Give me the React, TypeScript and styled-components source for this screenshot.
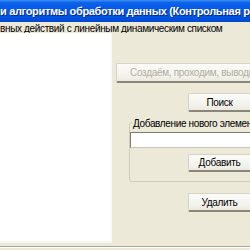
import React from "react";
import styled, { createGlobalStyle } from "styled-components";

const Global = createGlobalStyle`
  html, body { margin: 0; padding: 0; background: #ece9d8; overflow: hidden; }
  * { box-sizing: border-box; }
`;

const Window = styled.div`
  width: 250px;
  height: 250px;
  overflow: hidden;
  display: flex;
  flex-direction: column;
  background: #ece9d8;
  font-family: "Liberation Sans", Arial, sans-serif;
  font-size: 10px;
  letter-spacing: -0.35px;
  color: #000;
`;

const TitleBar = styled.div`
  height: 22px;
  flex: none;
  background: linear-gradient(#3d8ff6 0%, #0c63ea 12%, #0257e6 45%, #0052e0 80%, #0049cf 100%);
  color: #fff;
  font-weight: bold;
  font-size: 11px;
  letter-spacing: -0.33px;
  line-height: 22px;
  white-space: nowrap;
  overflow: hidden;
  text-shadow: 1px 1px 0 #0a2a8a;
`;

const GroupLabel = styled.div`
  height: 11px;
  flex: none;
  line-height: 11px;
  padding-top: 1px;
  white-space: nowrap;
  overflow: hidden;
`;

const MainRow = styled.div`
  height: 210px;
  flex: none;
  display: flex;
  gap: 4px;
`;

const ListBox = styled.div`
  flex: none;
  width: 112px;
  height: 100%;
  background: #fff;
  border-right: 1px solid #f7f6f1;
  border-bottom: 2px solid #f7f6f1;
`;

const RightCol = styled.div`
  flex: 1;
  min-width: 0;
  overflow: hidden;
  display: flex;
  flex-direction: column;
  align-items: flex-start;
`;

const Button = styled.button<{ $top: number; $left: number; $h: number; $w: number; $disabled?: boolean }>`
  flex: none;
  margin-top: ${(p) => p.$top}px;
  margin-left: ${(p) => p.$left}px;
  height: ${(p) => p.$h}px;
  width: ${(p) => p.$w}px;
  font-family: "Liberation Sans", Arial, sans-serif;
  font-size: 10px;
  letter-spacing: -0.3px;
  color: ${(p) => (p.$disabled ? "#b0ad9f" : "#000")};
  text-align: ${(p) => (p.$disabled ? "left" : "center")};
  padding: 0 ${(p) => (p.$disabled ? 0 : 12)}px 0 ${(p) => (p.$disabled ? 13 : 0)}px;
  white-space: nowrap;
  overflow: hidden;
  background: linear-gradient(#fbfbf8, #f3f2ec 70%, #ebe9e0);
  border-style: solid;
  border-width: 1px 1px 2px 1px;
  border-color: #d6d3c6 #8f8c80 #8a877a #d6d3c6;
  border-radius: 2px;
`;

const Group = styled.div`
  position: relative;
  flex: none;
  margin-top: 10px;
  margin-left: 13px;
  width: 140px;
  height: 60px;
  border: 1px solid #cfccbd;
  border-radius: 3px;
  display: flex;
  flex-direction: column;
  align-items: flex-start;
`;

const Legend = styled.span`
  position: absolute;
  top: -5px;
  left: 2px;
  padding: 0 1px;
  background: #ece9d8;
  line-height: 12px;
  white-space: nowrap;
`;

const Input = styled.div`
  flex: none;
  margin-top: 9px;
  width: 130px;
  height: 16px;
  background: #fff;
  border-top: 1px solid #7c7b74;
  border-left: 1px solid #7c7b74;
  border-bottom: 1px solid #c8c5b6;
`;

const BottomEdge = styled.div`
  flex: none;
  margin-top: 3px;
  height: 2px;
  border-top: 1px solid #aca899;
  border-bottom: 1px solid #fff;
`;

export default function App() {
  return (
    <>
      <Global />
      <Window>
        <TitleBar>и алгоритмы обработки данных (Контрольная работа)</TitleBar>
        <GroupLabel>вных действий с линейным динамическим списком</GroupLabel>
        <MainRow>
          <ListBox />
          <RightCol>
            <Button $top={30} $left={0} $h={20} $w={240} $disabled disabled>
              Создаём, проходим, выводим список
            </Button>
            <Button $top={10} $left={72} $h={19} $w={75}>Поиск</Button>
            <Group>
              <Legend>Добавление нового элемента</Legend>
              <Input />
              <Button $top={6} $left={58} $h={18} $w={75}>Добавить</Button>
            </Group>
            <Button $top={11} $left={72} $h={19} $w={75}>Удалить</Button>
          </RightCol>
        </MainRow>
        <BottomEdge />
      </Window>
    </>
  );
}
